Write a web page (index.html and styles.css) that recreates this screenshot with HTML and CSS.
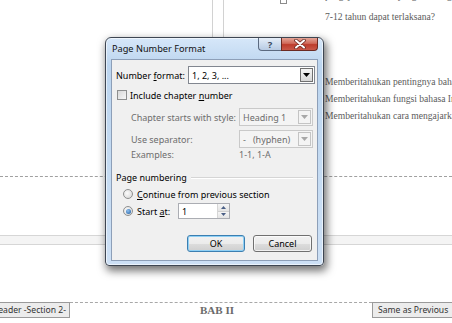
FILE: index.html
```html
<!DOCTYPE html>
<html>
<head>
  <meta charset="utf-8">
  <title>Page Number Format</title>
  <link rel="stylesheet" href="styles.css">
</head>
<body>
  <div class="doc">
    <div class="doc-top">
      <div class="table-rule"></div>
      <div class="mark"></div>
      <div class="doc-text">
        <p class="cut">pengajaran bahasa yang baik bagi anak usia</p>
        <p>7-12 tahun dapat terlaksana?</p>
        <div class="aims">
          <p>Memberitahukan pentingnya bahasa Indonesia</p>
          <p>Memberitahukan fungsi bahasa Indonesia</p>
          <p>Memberitahukan cara mengajarkan bahasa</p>
        </div>
      </div>
    </div>
    <div class="page-break"></div>
    <div class="ruler-band"></div>
    <div class="header-bar">
      <div class="tab tab-left"><span>Header -Section 2-</span></div>
      <div class="header-line"><span class="bab">BAB II</span></div>
      <div class="tab tab-right"><span>Same as Previous</span></div>
    </div>
  </div>

  <div class="dialog">
    <div class="titlebar">
      <span class="title">Page Number Format</span>
      <div class="caption-btns">
        <div class="cap help">?</div>
        <div class="cap close">
          <svg width="14" height="10" viewBox="0 0 14 10">
            <path d="M3 1.5 L11 8.5 M11 1.5 L3 8.5" stroke="#6b2a22" stroke-width="3.6" stroke-linecap="round"/>
            <path d="M3 1.5 L11 8.5 M11 1.5 L3 8.5" stroke="#fff" stroke-width="2" stroke-linecap="round"/>
          </svg>
        </div>
      </div>
    </div>

    <div class="client">
      <div class="row row-format">
        <span class="lbl">Number <u>f</u>ormat:</span>
        <div class="combo combo-main">
          <span class="combo-text">1, 2, 3, ...</span>
          <span class="combo-arrow">
            <svg width="7" height="4" viewBox="0 0 7 4"><path d="M0 0 H7 L3.5 4 Z" fill="#000"/></svg>
          </span>
        </div>
      </div>

      <div class="row row-check">
        <span class="check"></span>
        <span>Include chapter <u>n</u>umber</span>
      </div>

      <div class="row row-sub">
        <span class="lbl-sub">Chapter starts with style:</span>
        <div class="combo combo-off">
          <span class="combo-text">Heading 1</span>
          <span class="combo-arrow">
            <svg width="7" height="4" viewBox="0 0 7 4"><path d="M0 0 H7 L3.5 4 Z" fill="#a8a8a8"/></svg>
          </span>
        </div>
      </div>

      <div class="row row-sub row-sep">
        <span class="lbl-sub">Use separator:</span>
        <div class="combo combo-off">
          <span class="combo-text">-&nbsp;&nbsp;&nbsp;(hyphen)</span>
          <span class="combo-arrow">
            <svg width="7" height="4" viewBox="0 0 7 4"><path d="M0 0 H7 L3.5 4 Z" fill="#a8a8a8"/></svg>
          </span>
        </div>
      </div>

      <div class="row row-sub row-examples">
        <span class="lbl-sub">Examples:</span>
        <span class="examples">1-1, 1-A</span>
      </div>

      <div class="group-head">
        <span>Page numbering</span>
        <span class="etch"></span>
      </div>

      <div class="row row-radio">
        <span class="radio"></span>
        <span><u>C</u>ontinue from previous section</span>
      </div>

      <div class="row row-radio row-start">
        <span class="radio on"></span>
        <span class="lbl-start">Start <u>a</u>t:</span>
        <div class="spin">
          <span class="spin-text">1</span>
          <span class="spin-btns">
            <span class="spin-btn">
              <svg width="5" height="3" viewBox="0 0 5 3"><path d="M0 3 H5 L2.5 0 Z" fill="#4a5f86"/></svg>
            </span>
            <span class="spin-btn">
              <svg width="5" height="3" viewBox="0 0 5 3"><path d="M0 0 H5 L2.5 3 Z" fill="#4a5f86"/></svg>
            </span>
          </span>
        </div>
      </div>

      <div class="actions">
        <button class="btn btn-default">OK</button>
        <button class="btn">Cancel</button>
      </div>
    </div>
  </div>
</body>
</html>
```

FILE: styles.css
```css
* {
  margin: 0;
  padding: 0;
  box-sizing: border-box;
}

body {
  width: 452px;
  height: 323px;
  overflow: hidden;
  position: relative;
  background: #fff;
  font-family: 'Noto Sans', 'Open Sans', sans-serif;
}

/* document behind the dialog */

.doc {
  display: flex;
  flex-direction: column;
}

.doc-top {
  height: 176px;
  display: flex;
  align-items: flex-start;
  overflow: hidden;
}

.table-rule {
  margin-left: 212px;
  width: 12px;
  height: 120px;
  border-left: 1px solid #d2d2d2;
  border-right: 1px solid #d2d2d2;
}

.mark {
  margin-left: 56px;
  margin-top: -2px;
  width: 7px;
  height: 6px;
  border: 1px solid #8c8c8c;
}

.doc-text {
  margin-left: 38px;
  flex: 1;
  overflow: hidden;
  white-space: nowrap;
  font-family: 'Liberation Serif', serif;
  font-size: 9.6px;
  line-height: 17px;
  color: #5c5c5c;
}

.doc-text .cut {
  margin-top: -13px;
  margin-bottom: 4px;
}

.aims {
  margin-top: 48px;
}

.page-break {
  border-top: 1px dashed #a0a0a0;
}

.ruler-band {
  margin-top: 58px;
  height: 10px;
  background: #f4f4f4;
  border-top: 1px solid #d6d6d6;
  border-bottom: 1px solid #d6d6d6;
}

.header-bar {
  margin-top: 57px;
  display: flex;
  align-items: flex-start;
  height: 17px;
}

.tab {
  height: 16px;
  background: #ececec;
  border: 1px solid #9a9a9a;
  font-size: 8.6px;
  color: #333;
  display: flex;
  align-items: center;
  white-space: nowrap;
  overflow: hidden;
}

.tab-left {
  width: 70px;
  justify-content: flex-end;
  padding-right: 3px;
  border-left: none;
}

.tab-right {
  width: 80px;
  padding-left: 5px;
  border-right: none;
}

.header-line {
  flex: 1;
  border-top: 1px dashed #a8a8a8;
  text-align: center;
  padding-right: 8px;
  font-size: 11px;
  line-height: 14px;
}

.bab {
  font-family: 'Liberation Serif', serif;
  font-weight: bold;
  color: #6a6a6a;
}

/* dialog */

.dialog {
  position: absolute;
  left: 105px;
  top: 37px;
  width: 219px;
  height: 229px;
  border: 1px solid #3e4652;
  border-radius: 6px 6px 4px 4px;
  padding: 0 5px 4px 5px;
  background: linear-gradient(#d6e7f9, #bcd5ef 12%, #c5dbf2 60%, #cde0f5);
  box-shadow: 2px 4px 8px 1px rgba(0,0,0,0.55), inset 0 0 0 1px rgba(255,255,255,0.6);
  display: flex;
  flex-direction: column;
  font-size: 9px;
  color: #000;
}

.titlebar {
  height: 21px;
  display: flex;
  align-items: center;
}

.title {
  padding-left: 1px;
  font-size: 9.2px;
  color: #111;
}

.caption-btns {
  margin-left: auto;
  align-self: flex-start;
  display: flex;
}

.cap {
  height: 13px;
  display: flex;
  align-items: center;
  justify-content: center;
  border: 1px solid #5b6a80;
  border-top: none;
}

.help {
  width: 23px;
  border-radius: 0 0 0 4px;
  border-right: none;
  background: linear-gradient(#e6eef8, #cddcee 50%, #b8cbe3);
  font-size: 9.5px;
  font-weight: bold;
  color: #3b4a5e;
}

.close {
  width: 37px;
  border-radius: 0 0 4px 0;
  border-color: #6b2a22;
  background: linear-gradient(#e4a597, #d06a5a 45%, #bd3c2c 55%, #c9594a);
}

.client {
  flex: 1;
  background: #f0f0f0;
  border: 1px solid #8d9fb8;
  display: flex;
  flex-direction: column;
}

.row {
  display: flex;
  align-items: center;
}

.row-format {
  margin-top: 6px;
  padding-left: 4px;
  height: 18px;
}

.lbl {
  width: 72px;
}

.combo {
  height: 18px;
  display: flex;
  align-items: center;
  border: 1px solid #828790;
  background: #fff;
  padding: 1px;
}

.combo-main {
  width: 127px;
}

.combo-text {
  flex: 1;
  padding-left: 2px;
  white-space: nowrap;
}

.combo-arrow {
  width: 13px;
  height: 14px;
  display: flex;
  align-items: center;
  justify-content: center;
  border: 1px solid #707070;
  background: linear-gradient(#f4f4f4, #e6e6e6 50%, #d6d6d6);
}

.combo-off {
  width: 74px;
  border-color: #c9c9c9;
  background: #f4f4f4;
  color: #6d6d6d;
}

.combo-off .combo-arrow {
  border-color: #c4c4c4;
  background: #f4f4f4;
}

.row-check {
  margin-top: 6px;
  padding-left: 5px;
  height: 10px;
  gap: 3px;
}

.check {
  width: 10px;
  height: 10px;
  border: 1px solid #8e8f8f;
  background: linear-gradient(135deg, #d8d8d8, #f7f7f7);
}

.row-sub {
  margin-top: 8px;
  padding-left: 19px;
  height: 18px;
  color: #6d6d6d;
}

.row-sep {
  margin-top: 4px;
}

.row-examples {
  margin-top: 0;
  height: 13px;
}

.lbl-sub {
  width: 108px;
}

.examples {
  color: #6d6d6d;
}

.group-head {
  margin-top: 10px;
  padding-left: 4px;
  padding-right: 4px;
  height: 13px;
  display: flex;
  align-items: center;
  gap: 4px;
}

.etch {
  flex: 1;
  height: 2px;
  border-top: 1px solid #d5d5d5;
  border-bottom: 1px solid #fff;
}

.row-radio {
  margin-top: 4px;
  padding-left: 11px;
  height: 12px;
  gap: 4px;
}

.radio {
  width: 10px;
  height: 10px;
  border-radius: 50%;
  border: 1px solid #8e8f8f;
  background: radial-gradient(circle at 40% 40%, #fbfbfb, #d4d4d4);
  display: flex;
  align-items: center;
  justify-content: center;
}

.radio.on::after {
  content: '';
  width: 5px;
  height: 5px;
  border-radius: 50%;
  background: radial-gradient(circle at 40% 35%, #8ec0f0, #1c5a9e);
}

.row-start {
  margin-top: 3px;
  height: 16px;
}

.lbl-start {
  width: 37px;
}

.spin {
  width: 52px;
  height: 16px;
  border: 1px solid #abadb3;
  background: #fff;
  display: flex;
  align-items: stretch;
}

.spin-text {
  flex: 1;
  padding-left: 3px;
  display: flex;
  align-items: center;
}

.spin-btns {
  width: 12px;
  display: flex;
  flex-direction: column;
  border-left: 1px solid #d6d6d6;
}

.spin-btn {
  flex: 1;
  display: flex;
  align-items: center;
  justify-content: center;
  background: linear-gradient(#f6f6f6, #e4e4e4);
  border-bottom: 1px solid #d0d0d0;
}

.spin-btn:last-child {
  border-bottom: none;
}

.actions {
  margin-top: 16px;
  padding-right: 5px;
  display: flex;
  justify-content: flex-end;
  gap: 8px;
}

.btn {
  width: 59px;
  height: 17px;
  border: 1px solid #707070;
  border-radius: 3px;
  background: linear-gradient(#f2f2f2, #ebebeb 50%, #dddddd 51%, #cfcfcf);
  font-family: inherit;
  font-size: 9px;
  color: #000;
  box-shadow: inset 0 0 0 1px rgba(255,255,255,0.7);
}

.btn-default {
  width: 58px;
  border-color: #3c7fb1;
  box-shadow: inset 0 0 0 1px #8fd0f5;
}
```
